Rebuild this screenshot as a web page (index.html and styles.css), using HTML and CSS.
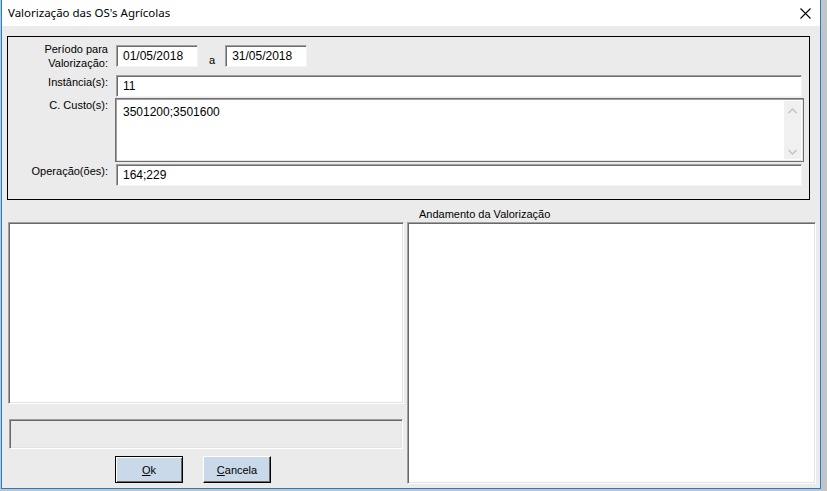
FILE: index.html
```html
<!DOCTYPE html>
<html lang="pt">
<head>
    <meta charset="UTF-8">
    <title>Valorização das OS's Agrícolas</title>
    <link rel="stylesheet" href="styles.css">
</head>
<body>
    <div class="window">
        <div class="titlebar">
            <span class="title">Valorização das OS's Agrícolas</span>
            <svg class="close" width="11" height="11" viewBox="0 0 11 11">
                <path d="M0.5 0.5 L10.5 10.5 M10.5 0.5 L0.5 10.5" stroke="#000" stroke-width="1.1" fill="none"/>
            </svg>
        </div>

        <div class="client">
            <!-- filtros -->
            <div class="group">
                <div class="row row-first">
                    <label class="lbl lbl-two">Período para<br>Valorização:</label>
                    <input class="edit date" type="text" value="01/05/2018">
                    <span class="sep">a</span>
                    <input class="edit date" type="text" value="31/05/2018">
                </div>
                <div class="row gap8">
                    <label class="lbl">Instância(s):</label>
                    <input class="edit wide" type="text" value="11">
                </div>
                <div class="row gap1">
                    <label class="lbl">C. Custo(s):</label>
                    <div class="memo">
                        <div class="memo-text">3501200;3501600</div>
                        <div class="vscroll">
                            <svg width="9" height="6" viewBox="0 0 9 6"><path d="M0.5 5 L4.5 1 L8.5 5" stroke="#c2c2c2" stroke-width="1.4" fill="none"/></svg>
                            <svg width="9" height="6" viewBox="0 0 9 6"><path d="M0.5 1 L4.5 5 L8.5 1" stroke="#c2c2c2" stroke-width="1.4" fill="none"/></svg>
                        </div>
                    </div>
                </div>
                <div class="row gap2">
                    <label class="lbl">Operação(ões):</label>
                    <input class="edit wide" type="text" value="164;229">
                </div>
            </div>

            <div class="lower">
                <div class="col col-left">
                    <div class="cap">&nbsp;</div>
                    <div class="listbox list-small"></div>
                    <div class="status"></div>
                    <div class="buttons">
                        <button class="btn btn-default"><u>O</u>k</button>
                        <button class="btn"><u>C</u>ancela</button>
                    </div>
                </div>
                <div class="col col-right">
                    <div class="cap">Andamento da Valorização</div>
                    <div class="listbox list-big"></div>
                </div>
            </div>
        </div>
    </div>
</body>
</html>
```

FILE: styles.css
```css
body {
    margin: 0;
    padding-left: 1px;
    background-color: #c4c4c4;
    font-family: "Liberation Sans", Arial, sans-serif;
    font-size: 11px;
    color: #000;
}
.window {
    width: 820px;
    height: 489px;
    box-sizing: border-box;
    border: 1px solid #1883d7;
    border-top: none;
    background-color: #ebebeb;
    display: flex;
    flex-direction: column;
}
.titlebar {
    height: 26px;
    background-color: #fff;
    display: flex;
    align-items: center;
    justify-content: space-between;
    padding: 0 9px 0 6px;
}
.title {
    font-family: "Noto Sans", "Open Sans", sans-serif;
    font-size: 11.5px;
    margin-top: -1px;
}
.close {
    margin-top: 1px;
}
.client {
    flex: 1;
    padding: 10px 0 0 5px;
}
.group {
    width: 803px;
    height: 164px;
    box-sizing: border-box;
    border: 1px solid #000;
    padding-top: 8px;
}
.row {
    display: flex;
    align-items: flex-start;
}
.row-first {
    height: 22px;
}
.gap8 { margin-top: 8px; }
.gap1 { margin-top: 1px; }
.gap2 { margin-top: 2px; }
.lbl {
    width: 100px;
    margin-right: 8px;
    text-align: right;
    line-height: 13px;
    padding-top: 1px;
    flex-shrink: 0;
}
.lbl-two {
    line-height: 14px;
    margin-top: -3px;
    padding-top: 0;
}
.edit {
    height: 22px;
    box-sizing: border-box;
    margin: 0;
    padding: 0 6px;
    border: 1px solid;
    border-color: #a0a0a0 #f4f4f4 #f4f4f4 #a0a0a0;
    box-shadow: inset 1px 1px #6d6d6d;
    background-color: #fff;
    font-family: "Liberation Sans", Arial, sans-serif;
    font-size: 12px;
    color: #000;
    outline: none;
}
.date {
    width: 82px;
}
.sep {
    align-self: flex-end;
    margin: 0 10px 0 11px;
    line-height: 13px;
    font-size: 11px;
}
.wide {
    width: 686px;
}
.memo {
    width: 689px;
    height: 64px;
    margin-left: -1px;
    box-sizing: border-box;
    border: 1px solid #6f6f6f;
    box-shadow: inset 1px 1px #a0a0a0, inset -1px -1px #e3e3e3;
    background-color: #fff;
    display: flex;
    padding: 2px;
}
.memo-text {
    flex: 1;
    font-size: 12px;
    padding: 4px 0 0 5px;
}
.vscroll {
    width: 17px;
    background-color: #f0f0f0;
    display: flex;
    flex-direction: column;
    justify-content: space-between;
    align-items: center;
    padding: 7px 0 4px 0;
}
.lower {
    display: flex;
    gap: 3px;
    margin-top: 6px;
}
.col {
    display: flex;
    flex-direction: column;
}
.col-left {
    width: 396px;
    margin-left: 1px;
}
.col-right {
    width: 409px;
}
.cap {
    height: 16px;
    line-height: 16px;
    padding-left: 12px;
}
.listbox {
    box-sizing: border-box;
    border: 1px solid;
    border-color: #a0a0a0 #fff #fff #a0a0a0;
    box-shadow: inset 1px 1px #696969, inset -1px -1px #e3e3e3;
    background-color: #fff;
}
.list-small {
    height: 182px;
}
.list-big {
    height: 262px;
}
.status {
    width: 394px;
    height: 30px;
    margin: 15px 0 0 1px;
    box-sizing: border-box;
    border: 1px solid;
    border-color: #a0a0a0 #fff #fff #a0a0a0;
    box-shadow: inset 1px 1px #696969, inset -1px -1px #e3e3e3;
}
.buttons {
    display: flex;
    gap: 20px;
    margin: 7px 0 0 107px;
}
.btn {
    width: 68px;
    height: 27px;
    box-sizing: border-box;
    padding: 0;
    border: 1px solid;
    border-color: #fff #000 #000 #fff;
    box-shadow: inset -1px -1px #696969;
    background-color: #cad9ea;
    font-family: "Liberation Sans", Arial, sans-serif;
    font-size: 11px;
    color: #000;
}
.btn-default {
    border-color: #000;
    box-shadow: inset 1px 1px #fff, inset -1px -1px #696969;
}
```
